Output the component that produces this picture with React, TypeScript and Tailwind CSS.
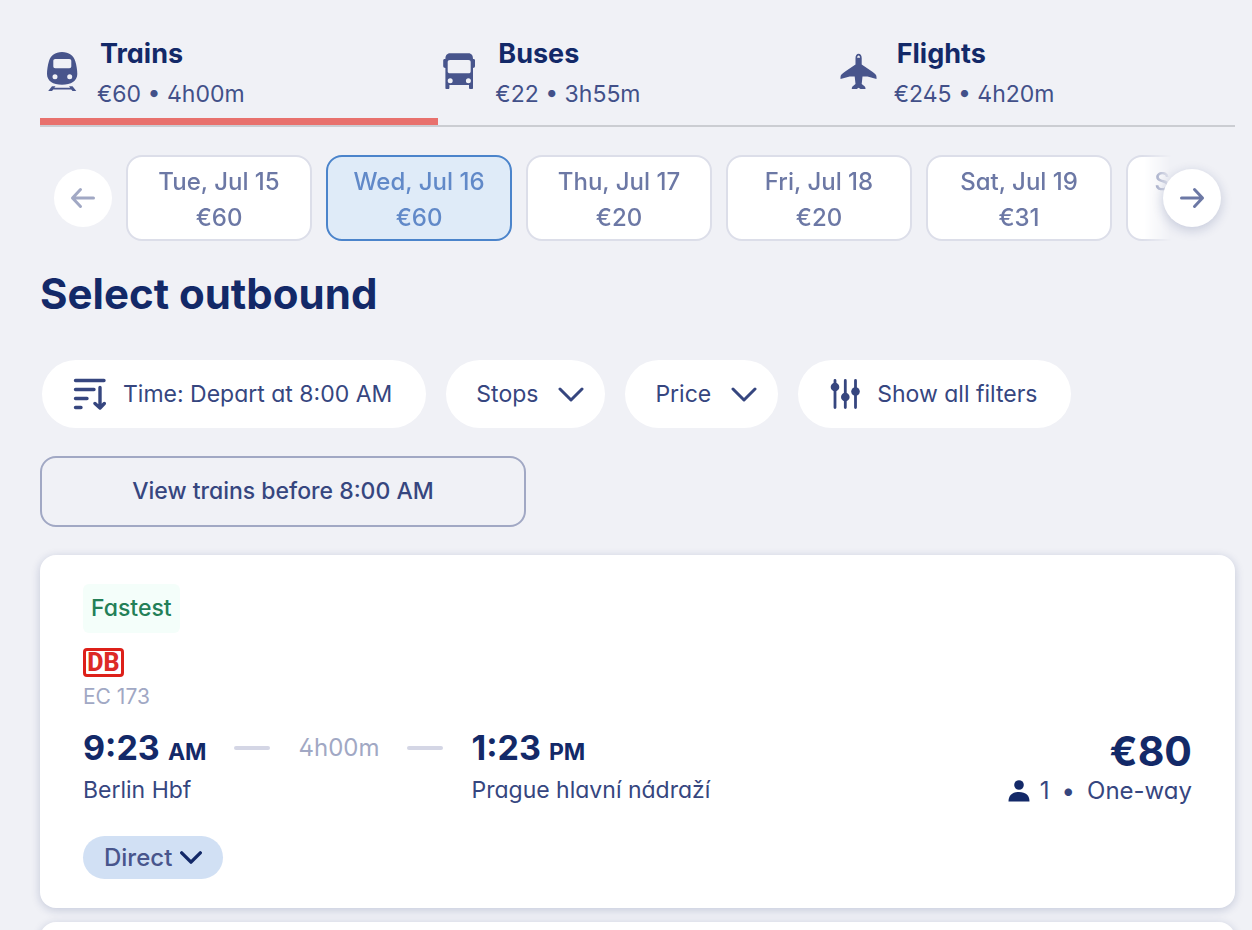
import type { ReactNode } from "react";
import clsx from "clsx";

function TrainIcon() {
  return (
    <svg width="40" height="42" viewBox="0 0 40 42" fill="#48558c" aria-hidden="true">
      <path
        fillRule="evenodd"
        d="M20 1C27 1 31.5 4.500 33.200 10C34.600 14.500 35.300 19 35.300 23C35.300 30 29 33.700 20 33.700S5 30 5 23C5 19 5.700 14.500 7 10C8.700 4.500 13 1 20 1ZM13.300 8C12 8 11.300 8.800 11.300 10V15.300C11.300 16.600 12 17.300 13.300 17.300H27.300C28.600 17.300 29.300 16.600 29.300 15.300V10C29.300 8.800 28.600 8 27.300 8ZM13 23.200A2.500 2.500 0 1 0 13 28.200A2.500 2.500 0 1 0 13 23.200ZM27.700 23.200A2.500 2.500 0 1 0 27.700 28.200A2.500 2.500 0 1 0 27.700 23.200Z"
      />
      <path d="M10 35.200H13.500L12.300 36.800H28.200L27 35.200H30.500L34.300 40H30.500L29.200 38.400H11.300L10 40H6.200Z" />
    </svg>
  );
}

function BusIcon() {
  return (
    <svg width="40" height="42" viewBox="0 0 40 42" fill="#48558c" aria-hidden="true">
      <path
        fillRule="evenodd"
        d="M10 2.300H28.500C31.500 2.300 33 4.500 33 8H33.600C34.500 8 35 8.600 35 9.500V15C35 16.300 34.300 17 33 17V37C33 37.600 32.600 38 32 38H30.300C29.500 38 29 37.500 29 36.700V34H9.400V36.700C9.400 37.500 9 38 8.200 38H6.400C5.800 38 5.400 37.600 5.400 37V17C4 17 3.200 16.300 3.200 15V9.500C3.200 8.600 3.700 8 4.600 8H5.400C5.400 4.500 7 2.300 10 2.300ZM10 9C8.500 9 7.700 9.800 7.700 11.200V20.200C7.700 21.600 8.500 22.300 10 22.300H28.400C30 22.300 30.700 21.600 30.700 20.200V11.200C30.700 9.800 30 9 28.400 9ZM10.200 27.200A2.500 2.500 0 1 0 10.200 32.200A2.500 2.500 0 1 0 10.200 27.200ZM28.400 27.200A2.500 2.500 0 1 0 28.400 32.200A2.500 2.500 0 1 0 28.400 27.200Z"
      />
    </svg>
  );
}

function PlaneIcon() {
  return (
    <svg width="40" height="42" viewBox="0 0 40 42" fill="#48558c" aria-hidden="true">
      <path
        fillRule="evenodd"
        d="M19.600 2.700C21.500 2.700 22.700 4.500 22.700 7V13.500L33 20.500C36 22.500 37.500 24 37.500 26V28L28.500 25.500H23.500L22.700 33L25.500 35.300C26.300 36 26.500 36.700 26.500 38H21.500L19.600 36.800L17.700 38H12.800C12.800 36.700 13 36 13.800 35.300L16.500 33L15.700 25.500H10.700L1.500 28V26C1.500 24 3.200 22.500 6.200 20.500L16.500 13.500V7C16.500 4.500 17.700 2.700 19.600 2.700ZM19.600 4.500C18.800 4.500 18.100 5.500 18.100 6.800H21.100C21.100 5.500 20.400 4.500 19.600 4.500Z"
      />
    </svg>
  );
}

function ArrowIcon({ className }: { className?: string }) {
  return (
    <svg
      width="26"
      height="22"
      viewBox="0 0 26 22"
      fill="none"
      stroke="currentColor"
      strokeWidth="3"
      strokeLinecap="round"
      strokeLinejoin="round"
      className={className}
      aria-hidden="true"
    >
      <path d="M2.500 11H23.500M15.500 2.500L23.500 11L15.500 19.500" />
    </svg>
  );
}

function SortIcon() {
  return (
    <svg
      width="34"
      height="34"
      viewBox="0 0 34 34"
      fill="none"
      stroke="#36467f"
      strokeWidth="3.400"
      strokeLinecap="round"
      strokeLinejoin="round"
      aria-hidden="true"
    >
      <path d="M3.500 3.500H32M3.500 12.500H22M3.500 21.500H15M3.500 30.500H9" />
      <path d="M28 10.500V30.500M23 26.500L28 31L32.300 26.500" />
    </svg>
  );
}

function SlidersIcon() {
  return (
    <svg width="32" height="30" viewBox="0 0 32 30" fill="#36467f" stroke="#36467f" aria-hidden="true">
      <path d="M7 1.500V28.500M17.300 1.500V28.500M27.500 1.500V28.500" strokeWidth="2.800" strokeLinecap="round" />
      <circle cx="7" cy="8" r="4.300" stroke="none" />
      <circle cx="17.300" cy="18" r="4.300" stroke="none" />
      <circle cx="27.500" cy="12.500" r="4.300" stroke="none" />
    </svg>
  );
}

function Chevron({ small }: { small?: boolean }) {
  return (
    <svg
      width={small ? 22 : 26}
      height={small ? 13 : 15}
      viewBox="0 0 26 15"
      fill="none"
      stroke="currentColor"
      strokeWidth={small ? 4 : 3}
      strokeLinecap="round"
      strokeLinejoin="round"
      aria-hidden="true"
    >
      <path d="M2 2L13 13L24 2" />
    </svg>
  );
}

function PersonIcon() {
  return (
    <svg width="22" height="22" viewBox="0 0 22 22" fill="#132968" aria-hidden="true">
      <circle cx="11" cy="5" r="4.800" />
      <path d="M0.500 21.500C0.500 15.500 4 12 11 12S21.500 15.500 21.500 21.500Z" />
    </svg>
  );
}

function DbLogo() {
  return (
    <span className="flex h-[29px] w-[41px] items-center justify-center rounded border-3 border-[#dd2019] font-['Roboto',sans-serif] text-[25px] leading-none font-extrabold text-[#dd2a26]">
      DB
    </span>
  );
}

const modes = [
  { name: "Trains", summary: "€60 • 4h00m", icon: TrainIcon },
  { name: "Buses", summary: "€22 • 3h55m", icon: BusIcon },
  { name: "Flights", summary: "€245 • 4h20m", icon: PlaneIcon },
];

const dates = [
  { day: "Tue, Jul 15", price: "€60" },
  { day: "Wed, Jul 16", price: "€60" },
  { day: "Thu, Jul 17", price: "€20" },
  { day: "Fri, Jul 18", price: "€20" },
  { day: "Sat, Jul 19", price: "€31" },
  { day: "Sun, Jul 20", price: "€31" },
];

function ModeTabs() {
  return (
    <div role="tablist" className="grid grid-cols-3 border-b-2 border-[#cbcdd2] pt-[33px]">
      {modes.map((mode, i) => (
        <button
          key={mode.name}
          type="button"
          role="tab"
          aria-selected={i === 0}
          className={clsx(
            "flex items-start gap-[15px] border-b-[7px] pb-1 pl-0.5 text-left",
            i === 0 ? "border-[#e8716d]" : "border-transparent",
          )}
        >
          <span className="pt-[18px]">
            <mode.icon />
          </span>
          <span className="flex flex-col pt-px">
            <span className="pl-[3px] text-[27px] leading-10 font-bold text-[#132968]">{mode.name}</span>
            <span className="text-[23px] leading-10 text-[#425089]">{mode.summary}</span>
          </span>
        </button>
      ))}
    </div>
  );
}

function DateStrip() {
  return (
    <div className="mt-7 flex items-center px-3.5">
      <button
        type="button"
        aria-label="Earlier dates"
        className="flex size-[58px] shrink-0 items-center justify-center rounded-full bg-white text-[#a1a8c4]"
      >
        <ArrowIcon className="rotate-180" />
      </button>
      <div className="flex min-w-0 flex-1 gap-3.5 overflow-hidden pl-3.5 [mask-image:linear-gradient(to_left,transparent,black_28px)]">
        {dates.map((date, i) => (
          <button
            key={date.day}
            type="button"
            className={clsx(
              "flex h-[86px] w-[186px] shrink-0 flex-col items-center justify-center rounded-2xl border-2 pt-1 text-[24px] leading-9 font-medium",
              i === 1 ? "border-[#4b84cb] bg-[#dfebf8] text-[#6189c8]" : "border-[#dcdee9] bg-white text-[#6c78a5]",
            )}
          >
            <span>{date.day}</span>
            <span>{date.price}</span>
          </button>
        ))}
      </div>
      <button
        type="button"
        aria-label="Later dates"
        className="relative -ml-2 flex size-[58px] shrink-0 items-center justify-center rounded-full bg-white text-[#6c78a5] shadow-[0_3px_12px_rgba(19,41,104,0.200)]"
      >
        <ArrowIcon />
      </button>
    </div>
  );
}

function Pill({ children, dropdown }: { children: ReactNode; dropdown?: boolean }) {
  return (
    <button
      type="button"
      className={clsx(
        "flex h-[68px] items-center rounded-full bg-white pl-[30px] text-[23px] whitespace-nowrap text-[#36467f]",
        dropdown ? "gap-5 pr-[21px]" : "gap-[17px] pr-[34px]",
      )}
    >
      {children}
      {dropdown && <Chevron />}
    </button>
  );
}

function Filters() {
  return (
    <div className="mt-[38px] flex gap-5 pl-0.5">
      <Pill>
        <SortIcon />
        Time: Depart at 8:00 AM
      </Pill>
      <Pill dropdown>Stops</Pill>
      <Pill dropdown>Price</Pill>
      <Pill>
        <SlidersIcon />
        Show all filters
      </Pill>
    </div>
  );
}

function Stop({ time, period, station }: { time: string; period: string; station: string }) {
  return (
    <div>
      <p className="text-[34px] leading-[42px] font-bold text-[#132968]">
        {time} <span className="text-[23px]">{period}</span>
      </p>
      <p className="text-[23px] leading-[34px] text-[#36467f]">{station}</p>
    </div>
  );
}

function TripCard() {
  return (
    <article className="mt-7 rounded-2xl bg-white px-[43px] py-[29px] shadow-[0_2px_10px_rgba(19,41,104,0.200)]">
      <span className="inline-block rounded-md bg-[#f4fefa] px-2 text-[23px] leading-[49px] font-medium text-[#237f57]">
        Fastest
      </span>
      <div className="mt-[15px]">
        <DbLogo />
      </div>
      <p className="mt-1 text-[21px] leading-8 text-[#a1a8c4]">EC 173</p>
      <div className="mt-3.5 flex items-start">
        <Stop time="9:23" period="AM" station="Berlin Hbf" />
        <div className="flex h-[42px] items-center gap-7 px-7 text-[24px] text-[#a1a8c4]">
          <span className="h-1 w-9 rounded-full bg-[#d4d6e5]" />
          <span>4h00m</span>
          <span className="h-1 w-9 rounded-full bg-[#d4d6e5]" />
        </div>
        <Stop time="1:23" period="PM" station="Prague hlavní nádraží" />
        <div className="ml-auto text-right">
          <p className="text-[41px] leading-[48px] font-bold text-[#132968]">€80</p>
          <p className="flex items-center justify-end text-[24px] leading-8 text-[#36467f]">
            <PersonIcon />
            <span className="pl-2.5">1</span>
            <span className="px-3">•</span>
            <span>One-way</span>
          </p>
        </div>
      </div>
      <button
        type="button"
        className="mt-[29px] flex h-[43px] items-center gap-2 rounded-full bg-[#d1e0f4] px-[21px] text-[24px] font-medium text-[#48558c]"
      >
        Direct
        <span className="text-[#132968]">
          <Chevron small />
        </span>
      </button>
    </article>
  );
}

export default function App() {
  return (
    <div className="h-screen overflow-hidden bg-[#f0f1f6] font-['Inter','Noto_Sans',sans-serif] [font-feature-settings:'cv02','cv11']">
      <main className="pr-[17px] pl-10">
        <ModeTabs />
        <DateStrip />
        <h1 className="mt-[25px] text-[42px] leading-[56px] font-bold text-[#132968]">Select outbound</h1>
        <Filters />
        <button
          type="button"
          className="mt-7 h-[71px] w-[486px] rounded-2xl border-2 border-[#a1a8c4] text-[23px] font-medium text-[#36467f]"
        >
          View trains before 8:00 AM
        </button>
        <TripCard />
        <div className="mt-3.5 h-20 rounded-2xl bg-white shadow-[0_2px_10px_rgba(19,41,104,0.200)]" />
      </main>
    </div>
  );
}
